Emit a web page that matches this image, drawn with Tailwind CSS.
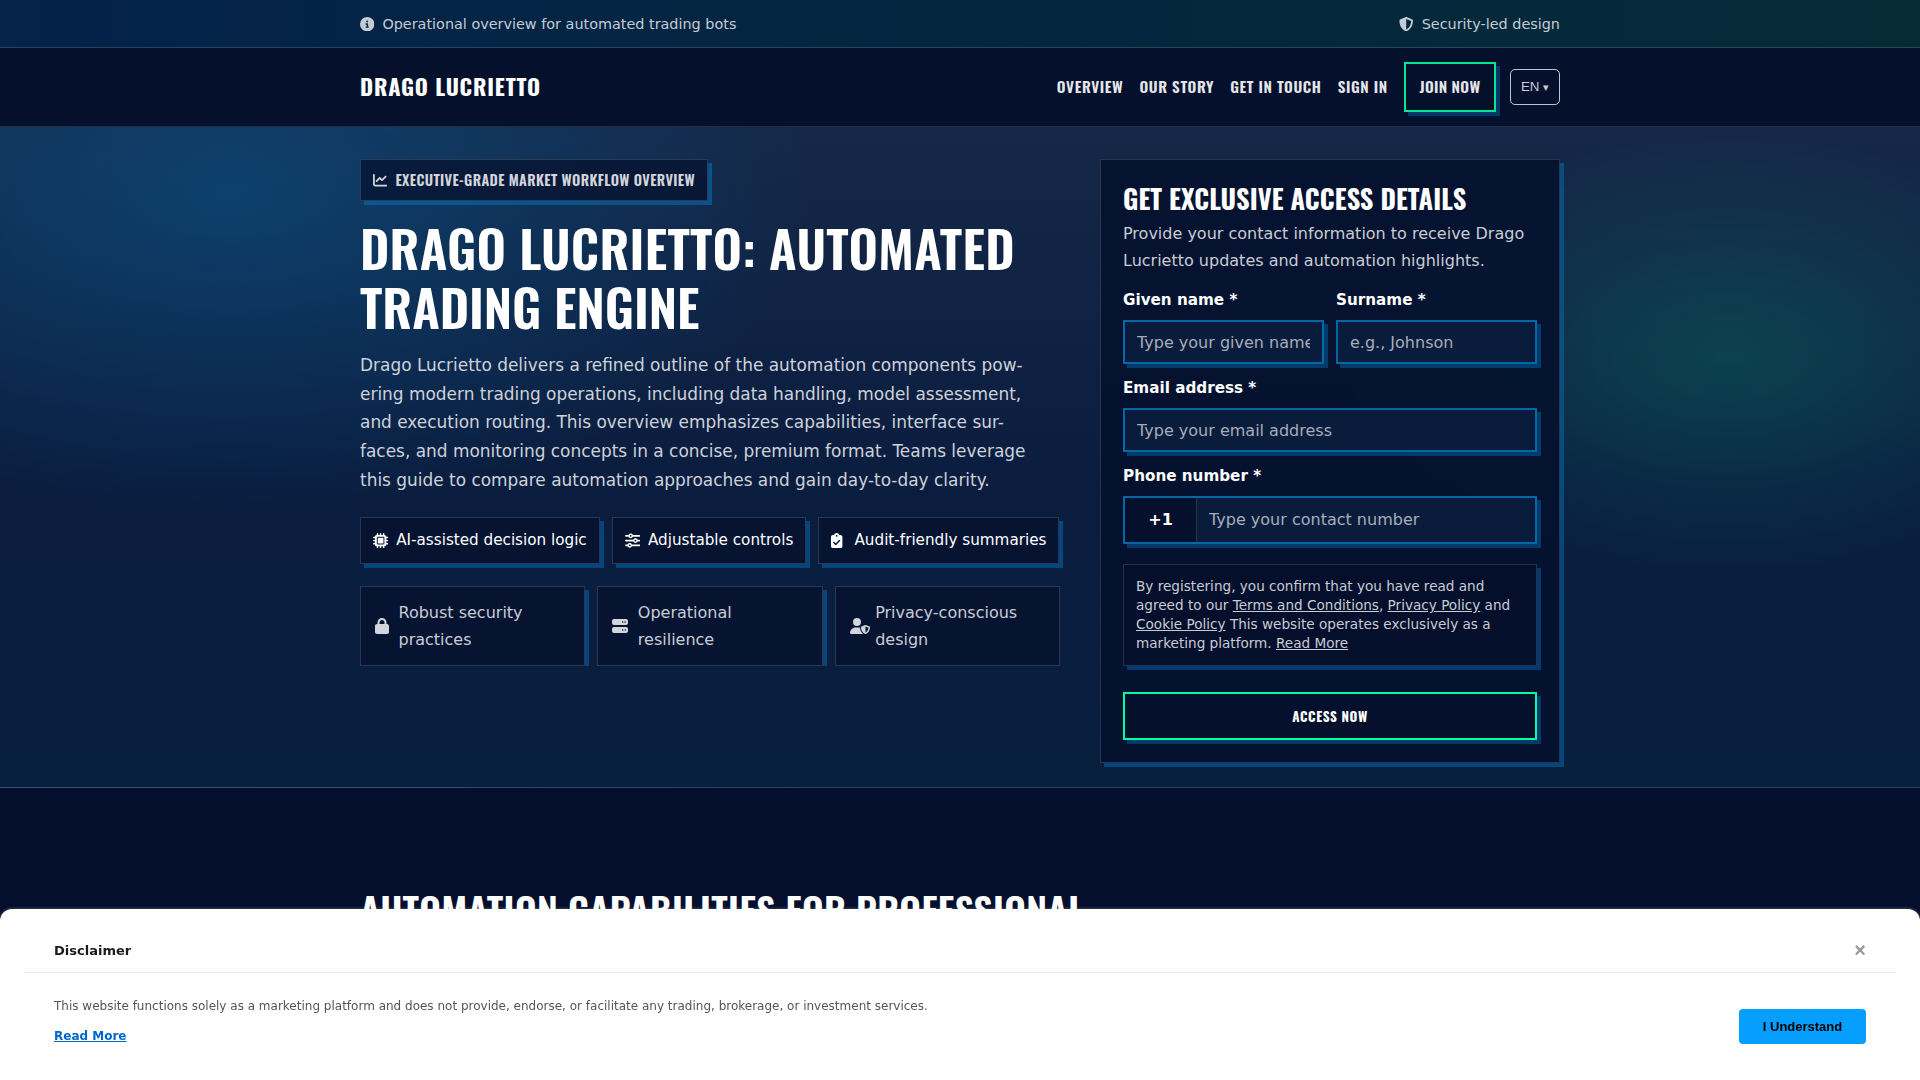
<!DOCTYPE html>
<html lang="en">
<head>
    <meta charset="UTF-8">
    <meta name="viewport" content="width=device-width, initial-scale=1.0">
    <title>Drago Lucrietto</title>
    <script src="https://cdn.jsdelivr.net/npm/@tailwindcss/browser@4"></script>
</head>
<body class="h-screen overflow-hidden bg-[#040f2d] font-['DejaVu_Sans',sans-serif] text-base leading-[1.7] text-white">

    <!-- Top bar -->
    <div class="h-12 border-b border-white/15 bg-linear-to-r from-[#04224a] via-[#03263f] to-[#052b37] text-[14.4px] text-[#c3ccd5]">
        <div class="mx-auto flex h-full w-[1200px] items-center justify-between pt-px">
            <div class="flex items-center gap-2">
                <svg class="size-[14.4px]" viewBox="0 0 512 512" fill="currentColor"><path d="M256 512A256 256 0 1 0 256 0a256 256 0 1 0 0 512zM216 336h24V272H216c-13.3 0-24-10.7-24-24s10.7-24 24-24h48c13.3 0 24 10.7 24 24v88h8c13.3 0 24 10.7 24 24s-10.7 24-24 24H216c-13.3 0-24-10.7-24-24s10.7-24 24-24zm40-208a32 32 0 1 1 0 64 32 32 0 1 1 0-64z"/></svg>
                <span class="pt-px">Operational overview for automated trading bots</span>
            </div>
            <div class="flex items-center gap-2">
                <svg class="size-[14.4px]" viewBox="0 0 512 512" fill="currentColor"><path d="M256 0c4.6 0 9.2 1 13.4 2.9L457.7 82.8c22 9.3 38.4 31 38.3 57.2c-.5 99.2-41.3 280.7-213.6 363.2c-16.7 8-36.1 8-52.8 0C57.3 420.7 16.5 239.2 16 140c-.1-26.2 16.3-47.9 38.3-57.2L242.7 2.9C246.8 1 251.4 0 256 0zm0 66.8V444.8C394 378 431.1 230.1 432 141.4L256 66.8z"/></svg>
                <span class="pt-px">Security-led design</span>
            </div>
        </div>
    </div>

    <!-- Header -->
    <header class="h-[79px] border-b border-white/12 bg-[#05102c]">
        <div class="mx-auto flex h-full w-[1200px] items-center justify-between font-['Oswald']">
            <a class="-mt-0.5 text-[22.4px] font-bold tracking-[0.036em]">DRAGO LUCRIETTO</a>
            <nav class="flex items-center text-[15.2px] font-semibold tracking-[0.04em] text-[#e4e6ea]">
                <div class="flex items-center gap-[16.2px]">
                    <a>OVERVIEW</a>
                    <a>OUR STORY</a>
                    <a>GET IN TOUCH</a>
                    <a>SIGN IN</a>
                    <a class="flex h-[50px] w-[92px] items-center justify-center border-2 border-[#00e896] tracking-[0.3px] shadow-[4px_4px_0_rgba(0,119,200,0.4)]">JOIN NOW</a>
                </div>
                <button class="ml-3.5 h-9 w-[50px] rounded-[5px] border border-white/75 font-['Liberation_Sans'] text-[13.33px] font-normal tracking-normal text-[#c9ccd5]">EN <span class="text-[11px]">▾</span></button>
            </nav>
        </div>
    </header>

    <!-- Hero -->
    <section class="h-[661px] border-b border-white/12 bg-[radial-gradient(ellipse_580px_320px_at_230px_66px,rgba(0,119,190,0.32),transparent),radial-gradient(ellipse_385px_222px_at_1728px_231px,rgba(0,255,157,0.15),transparent),linear-gradient(180deg,#152848_0%,#0a1d3f_55%,#091f3e_100%)] pt-8">
        <div class="mx-auto grid w-[1200px] grid-cols-[700px_460px] gap-10">
            <div>
                <div class="flex h-[42px] w-fit items-center gap-2 border border-white/15 bg-[#05112f]/75 px-3 font-['Oswald'] text-[14.4px] font-semibold tracking-[0.36px] text-[#d2d5dc] shadow-[4px_4px_0_rgba(0,119,200,0.5)]">
                    <svg class="size-[14.4px]" viewBox="0 0 512 512" fill="currentColor"><path d="M64 64c0-17.7-14.3-32-32-32S0 46.3 0 64V400c0 44.2 35.8 80 80 80H480c17.7 0 32-14.3 32-32s-14.3-32-32-32H80c-8.8 0-16-7.2-16-16V64zm406.6 86.6c12.5-12.5 12.5-32.8 0-45.3s-32.8-12.5-45.3 0L320 210.7l-57.4-57.4c-12.5-12.5-32.8-12.5-45.3 0l-112 112c-12.5 12.5-12.5 32.8 0 45.3s32.8 12.5 45.3 0L240 221.3l57.4 57.4c12.5 12.5 32.8 12.5 45.3 0l128-128z"/></svg>
                    <span>EXECUTIVE-GRADE MARKET WORKFLOW OVERVIEW</span>
                </div>
                <h1 class="mt-[17px] font-['Oswald'] text-[51.2px] leading-[58.9px] font-semibold tracking-[0.28px]">DRAGO LUCRIETTO: AUTOMATED<br><span class="tracking-[-0.05px]">TRADING ENGINE</span></h1>
                <p class="mt-[15px] mb-[22.5px] text-[16.96px] leading-[28.7px] text-[#cdd2da]">Drago Lucrietto delivers a refined outline of the automation components pow-<br>ering modern trading operations, including data handling, model assessment,<br>and execution routing. This overview emphasizes capabilities, interface sur-<br>faces, and monitoring concepts in a concise, premium format. Teams leverage<br>this guide to compare automation approaches and gain day-to-day clarity.</p>

                <div class="flex gap-3 text-[15.2px]">
                    <div class="flex h-[47px] items-center gap-2 border border-white/15 bg-[#05112f]/75 px-3 shadow-[4px_4px_0_rgba(0,119,200,0.45)]">
                        <svg class="size-[15.2px]" viewBox="0 0 512 512" fill="currentColor"><path d="M176 24c0-13.3-10.7-24-24-24s-24 10.7-24 24V64c-35.3 0-64 28.7-64 64H24c-13.3 0-24 10.7-24 24s10.7 24 24 24H64v56H24c-13.3 0-24 10.7-24 24s10.7 24 24 24H64v56H24c-13.3 0-24 10.7-24 24s10.7 24 24 24H64c0 35.3 28.7 64 64 64v40c0 13.3 10.7 24 24 24s24-10.7 24-24V448h56v40c0 13.3 10.7 24 24 24s24-10.7 24-24V448h56v40c0 13.3 10.7 24 24 24s24-10.7 24-24V448c35.3 0 64-28.7 64-64h40c13.3 0 24-10.7 24-24s-10.7-24-24-24H448V280h40c13.3 0 24-10.7 24-24s-10.7-24-24-24H448V176h40c13.3 0 24-10.7 24-24s-10.7-24-24-24H448c0-35.3-28.7-64-64-64V24c0-13.3-10.7-24-24-24s-24 10.7-24 24V64H280V24c0-13.3-10.7-24-24-24s-24 10.7-24 24V64H176V24zM160 128H352c17.7 0 32 14.3 32 32V352c0 17.7-14.3 32-32 32H160c-17.7 0-32-14.3-32-32V160c0-17.7 14.3-32 32-32zm192 32H160V352H352V160z"/></svg>
                        <span class="pt-px">AI-assisted decision logic</span>
                    </div>
                    <div class="flex h-[47px] items-center gap-2 border border-white/15 bg-[#05112f]/75 px-3 shadow-[4px_4px_0_rgba(0,119,200,0.45)]">
                        <svg class="size-[15.2px]" viewBox="0 0 512 512" fill="currentColor"><path d="M0 416c0 17.7 14.3 32 32 32l54.7 0c12.3 28.3 40.5 48 73.3 48s61-19.7 73.3-48L480 448c17.7 0 32-14.3 32-32s-14.3-32-32-32l-246.7 0c-12.3-28.3-40.5-48-73.3-48s-61 19.7-73.3 48L32 384c-17.7 0-32 14.3-32 32zm128 0a32 32 0 1 1 64 0 32 32 0 1 1 -64 0zM320 256a32 32 0 1 1 64 0 32 32 0 1 1 -64 0zm32-80c-32.8 0-61 19.7-73.3 48L32 224c-17.7 0-32 14.3-32 32s14.3 32 32 32l246.7 0c12.3 28.3 40.5 48 73.3 48s61-19.7 73.3-48l54.7 0c17.7 0 32-14.3 32-32s-14.3-32-32-32l-54.7 0c-12.3-28.3-40.5-48-73.3-48zM192 128a32 32 0 1 1 0-64 32 32 0 1 1 0 64zm73.3-64C253 35.7 224.8 16 192 16s-61 19.7-73.3 48L32 64C14.3 64 0 78.3 0 96s14.3 32 32 32l86.7 0c12.3 28.3 40.5 48 73.3 48s61-19.7 73.3-48L480 128c17.7 0 32-14.3 32-32s-14.3-32-32-32L265.3 64z"/></svg>
                        <span class="pt-px">Adjustable controls</span>
                    </div>
                    <div class="flex h-[47px] items-center gap-2 border border-white/15 bg-[#05112f]/75 px-3 shadow-[4px_4px_0_rgba(0,119,200,0.45)]">
                        <svg class="mr-[3.8px] h-[15.2px] w-[11.4px]" viewBox="0 0 384 512" fill="currentColor"><path d="M192 0c-41.8 0-77.4 26.7-90.5 64H64C28.7 64 0 92.7 0 128V448c0 35.3 28.7 64 64 64H320c35.3 0 64-28.7 64-64V128c0-35.3-28.7-64-64-64H282.5C269.4 26.7 233.8 0 192 0zm0 64a32 32 0 1 1 0 64 32 32 0 1 1 0-64zM305 273L177 401c-9.4 9.4-24.6 9.4-33.9 0L79 337c-9.4-9.4-9.4-24.6 0-33.9s24.6-9.4 33.9 0l47 47L271 239c9.4-9.4 24.6-9.4 33.9 0s9.4 24.6 0 33.9z"/></svg>
                        <span class="pt-px">Audit-friendly summaries</span>
                    </div>
                </div>

                <!-- the wrapper clips the shadows along the bottom and right edge -->
                <div class="mt-[22px] grid h-20 grid-cols-3 gap-3 overflow-hidden leading-[27.2px] text-[#c8cdd6]">
                    <div class="flex items-center gap-[9.5px] border border-white/15 bg-[#05112f]/75 px-3.5 shadow-[4px_4px_0_rgba(0,119,200,0.45)]">
                        <svg class="h-4 w-3.5 shrink-0 text-[#d2d5dc]" viewBox="0 0 448 512" fill="currentColor"><path d="M144 144v48H304V144c0-44.2-35.8-80-80-80s-80 35.8-80 80zM80 192V144C80 64.5 144.5 0 224 0s144 64.5 144 144v48h16c35.3 0 64 28.7 64 64V448c0 35.3-28.7 64-64 64H64c-35.3 0-64-28.7-64-64V256c0-35.3 28.7-64 64-64H80z"/></svg>
                        <span>Robust security<br>practices</span>
                    </div>
                    <div class="flex items-center gap-[9.5px] border border-white/15 bg-[#05112f]/75 px-3.5 shadow-[4px_4px_0_rgba(0,119,200,0.45)]">
                        <svg class="size-4 shrink-0 text-[#d2d5dc]" viewBox="0 0 512 512" fill="currentColor"><path d="M64 32C28.7 32 0 60.7 0 96v64c0 35.3 28.7 64 64 64H448c35.3 0 64-28.7 64-64V96c0-35.3-28.7-64-64-64H64zm280 72a24 24 0 1 1 0 48 24 24 0 1 1 0-48zm48 24a24 24 0 1 1 48 0 24 24 0 1 1 -48 0zM64 288c-35.3 0-64 28.7-64 64v64c0 35.3 28.7 64 64 64H448c35.3 0 64-28.7 64-64V352c0-35.3-28.7-64-64-64H64zm280 72a24 24 0 1 1 0 48 24 24 0 1 1 0-48zm56 24a24 24 0 1 1 48 0 24 24 0 1 1 -48 0z"/></svg>
                        <span>Operational<br>resilience</span>
                    </div>
                    <div class="flex items-center gap-[5.5px] border border-white/15 bg-[#05112f]/75 px-3.5 shadow-[4px_4px_0_rgba(0,119,200,0.45)]">
                        <svg class="h-4 w-5 shrink-0 text-[#d2d5dc]" viewBox="0 0 640 512" fill="currentColor"><path d="M224 256A128 128 0 1 0 224 0a128 128 0 1 0 0 256zm-45.7 48C79.8 304 0 383.8 0 482.3C0 498.7 13.3 512 29.7 512H418.3c1.8 0 3.5-.2 5.3-.5c-76.3-55.1-99.8-141-103.1-200.2c-16.1-4.8-33.1-7.3-50.7-7.3H178.3zm308.8-78.3l-120 48C358 277.4 352 286.2 352 296c0 63.3 25.9 168.8 134.8 214.2c5.9 2.5 12.6 2.5 18.5 0C614.1 464.8 640 359.3 640 296c0-9.8-6-18.6-15.1-22.3l-120-48c-5.7-2.3-12.1-2.3-17.8 0zM591.4 312c-3.9 50.7-27.2 116.7-95.4 149.7V273.8L591.4 312z"/></svg>
                        <span>Privacy-conscious<br>design</span>
                    </div>
                </div>
            </div>

            <!-- Lead form -->
            <form class="h-[604px] border border-white/15 bg-[#04102d]/85 p-[22px] shadow-[4px_4px_0_rgba(0,119,200,0.45)]">
                <h2 class="h-[38px] font-['Oswald'] text-[26.4px] leading-[34px] font-bold tracking-[0.1px]">GET EXCLUSIVE ACCESS DETAILS</h2>
                <p class="h-[66px] leading-[27.2px] text-[#c8ccd4]">Provide your contact information to receive Drago<br>Lucrietto updates and automation highlights.</p>
                <div class="grid grid-cols-2 gap-3">
                    <div>
                        <label class="mb-2 block h-[26px] pt-0.5 text-[15.2px] font-bold">Given name *</label>
                        <input class="block h-11 w-full border-2 border-[#0866a5] bg-[#0a1c3b] px-3 placeholder-[#a6adba] shadow-[4px_4px_0_rgba(0,119,200,0.4)]" placeholder="Type your given name">
                    </div>
                    <div>
                        <label class="mb-2 block h-[26px] pt-0.5 text-[15.2px] font-bold">Surname *</label>
                        <input class="block h-11 w-full border-2 border-[#0866a5] bg-[#0a1c3b] px-3 placeholder-[#a6adba] shadow-[4px_4px_0_rgba(0,119,200,0.4)]" placeholder="e.g., Johnson">
                    </div>
                </div>
                <label class="mt-2.5 mb-2 block h-[26px] pt-0.5 text-[15.2px] font-bold">Email address *</label>
                <input class="block h-11 w-full border-2 border-[#0866a5] bg-[#0a1c3b] px-3 placeholder-[#a6adba] shadow-[4px_4px_0_rgba(0,119,200,0.4)]" placeholder="Type your email address">
                <label class="mt-2.5 mb-2 block h-[26px] pt-0.5 text-[15.2px] font-bold">Phone number *</label>
                <div class="flex h-12 border-2 border-[#0866a5] bg-[#0a1c3b] shadow-[4px_4px_0_rgba(0,119,200,0.4)]">
                    <span class="flex w-[72px] items-center justify-center border-r border-white/15 bg-[#05102c] font-bold">+1</span>
                    <input class="min-w-0 flex-1 px-3 placeholder-[#a6adba]" placeholder="Type your contact number">
                </div>
                <div class="mt-5 h-[102px] border border-white/15 bg-[#040f2c] p-3 text-[13.6px] leading-[19px] text-[#c8ccd4] shadow-[4px_4px_0_rgba(0,119,200,0.4)]">
                    By registering, you confirm that you have read and<br>agreed to our <a class="underline">Terms and Conditions</a>, <a class="underline">Privacy Policy</a> and<br><a class="underline">Cookie Policy</a> This website operates exclusively as a<br>marketing platform. <a class="underline">Read More</a>
                </div>
                <button type="button" class="mt-[26px] h-12 w-full border-2 border-[#00ff9d] bg-[#05102c] font-['Oswald'] text-[13.33px] font-bold tracking-[0.6px] shadow-[4px_4px_0_rgba(0,119,200,0.4)]">ACCESS NOW</button>
            </form>
        </div>
    </section>

    <section class="mx-auto w-[1200px] pt-[99px]">
        <h2 class="font-['Oswald'] text-[37.6px] leading-[44px] font-semibold tracking-[0.42px]">AUTOMATION CAPABILITIES FOR PROFESSIONAL</h2>
    </section>

    <!-- Disclaimer sheet -->
    <div class="fixed inset-x-0 bottom-0 h-[171px] rounded-t-xl bg-white px-6 text-[#1a1a1a] shadow-[0_-1px_3px_rgba(255,255,255,0.2)]">
        <div class="flex h-[64px] items-center justify-between border-b border-[#ebebeb] px-[30px] pt-[18px]">
            <span class="pt-[3px] text-[13px] font-bold">Disclaimer</span>
            <span class="font-['Liberation_Sans'] text-[20px] font-bold text-[#999]">×</span>
        </div>
        <div class="flex items-start justify-between px-[30px] text-[12px]">
            <div class="pt-[23px]">
                <p class="text-[#555]">This website functions solely as a marketing platform and does not provide, endorse, or facilitate any trading, brokerage, or investment services.</p>
                <a class="mt-2.5 block font-bold text-[#0066cc] underline">Read More</a>
            </div>
            <button class="mt-9 h-[35px] w-[127px] rounded bg-[#079fff] pt-px font-['Liberation_Sans'] text-[13px] font-bold text-black">I Understand</button>
        </div>
    </div>
</body>
</html>
